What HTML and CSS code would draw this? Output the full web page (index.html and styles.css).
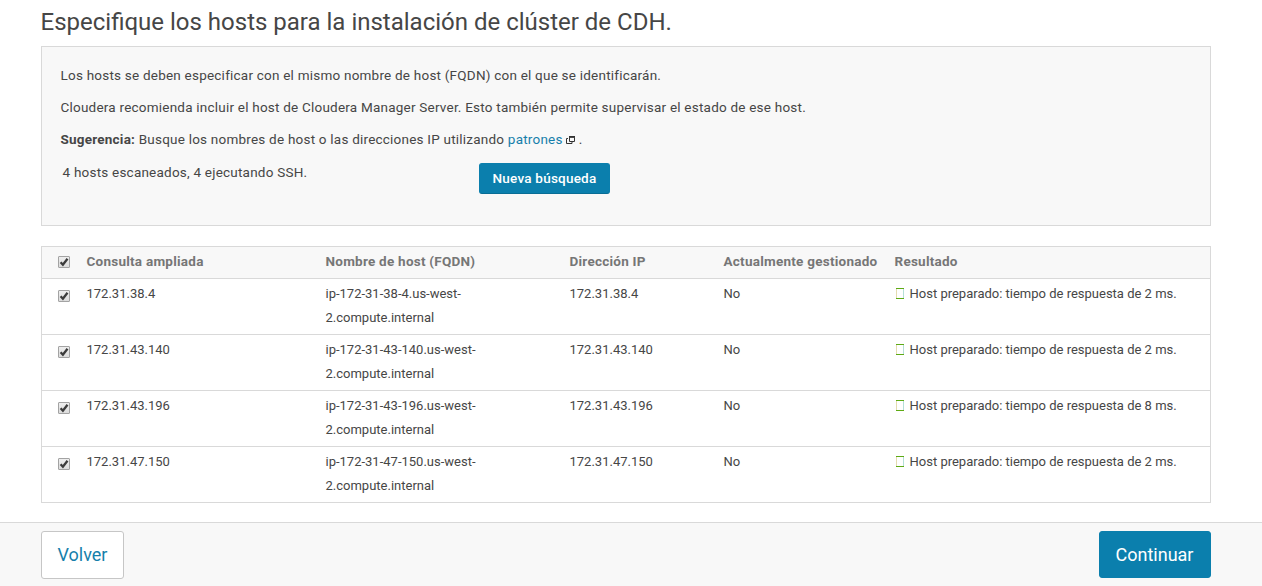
FILE: index.html
```html
<!DOCTYPE html>
<html lang="es">
<head>
<meta charset="utf-8">
<title>Instalación de clúster</title>
<link rel="stylesheet" href="styles.css">
</head>
<body>
<svg class="defs" width="0" height="0">
  <defs>
    <linearGradient id="box" x1="0" y1="0" x2="0" y2="1"><stop offset="0" stop-color="#efefef"/><stop offset="1" stop-color="#dcdcdc"/></linearGradient>
    <symbol id="check" viewBox="0 0 13 13">
      <rect x=".5" y=".5" width="11" height="11" rx=".5" fill="url(#box)" stroke="#a3a3a3"/>
      <path d="M2.6 6.2 4.9 8.7 9.5 2.8" fill="none" stroke="#3c3c3c" stroke-width="2.3"/>
    </symbol>
    <symbol id="glyph" viewBox="0 0 10 12">
      <path d="M1 .5H9M1 10.5H9" stroke="#5eaa14"/>
      <path d="M1.5 1V10" stroke="#e4dcb0"/>
      <path d="M8.5 1V10" stroke="#b5dfd8"/>
    </symbol>
  </defs>
</svg>
<main class="content">
  <h1 class="title">Especifique los hosts para la instalación de clúster de CDH.</h1>
  <section class="panel">
    <p class="l1">Los hosts se deben especificar con el mismo nombre de host (FQDN) con el que se identificarán.</p>
    <p class="l2">Cloudera recomienda incluir el host de Cloudera Manager Server. Esto también permite supervisar el estado de ese host.</p>
    <p class="l3"><b>Sugerencia:</b> Busque los nombres de host o las direcciones IP utilizando <a class="link">patrones</a> <svg class="ext" viewBox="0 0 9 8"><path d="M2 2.5H.5V7.5H6V6" fill="none" stroke="#333"/><path d="M3.5 1.2H8.5V5.5H3.5Z" fill="none" stroke="#333"/><path d="M3 .8H9" stroke="#333" stroke-width="1.6"/></svg> .</p>
    <div class="scan"><span class="status">4 hosts escaneados, 4 ejecutando SSH.</span><button class="btn search">Nueva búsqueda</button></div>
  </section>
  <table class="hosts">
    <colgroup><col class="c0"><col class="c1"><col class="c2"><col class="c3"><col class="c4"><col></colgroup>
    <thead><tr><th><svg class="cb"><use href="#check"/></svg></th><th>Consulta ampliada</th><th>Nombre de host (FQDN)</th><th>Dirección IP</th><th>Actualmente gestionado</th><th>Resultado</th></tr></thead>
    <tbody>
      <tr><td><svg class="cb"><use href="#check"/></svg></td><td>172.31.38.4</td><td>ip-172-31-38-4.us-west-<br>2.compute.internal</td><td>172.31.38.4</td><td>No</td><td><svg class="gl"><use href="#glyph"/></svg>Host preparado: tiempo de respuesta de 2 ms.</td></tr>
      <tr><td><svg class="cb"><use href="#check"/></svg></td><td>172.31.43.140</td><td>ip-172-31-43-140.us-west-<br>2.compute.internal</td><td>172.31.43.140</td><td>No</td><td><svg class="gl"><use href="#glyph"/></svg>Host preparado: tiempo de respuesta de 2 ms.</td></tr>
      <tr><td><svg class="cb"><use href="#check"/></svg></td><td>172.31.43.196</td><td>ip-172-31-43-196.us-west-<br>2.compute.internal</td><td>172.31.43.196</td><td>No</td><td><svg class="gl"><use href="#glyph"/></svg>Host preparado: tiempo de respuesta de 8 ms.</td></tr>
      <tr><td><svg class="cb"><use href="#check"/></svg></td><td>172.31.47.150</td><td>ip-172-31-47-150.us-west-<br>2.compute.internal</td><td>172.31.47.150</td><td>No</td><td><svg class="gl"><use href="#glyph"/></svg>Host preparado: tiempo de respuesta de 2 ms.</td></tr>
    </tbody>
  </table>
</main>
<footer class="footer"><button class="btn back">Volver</button><button class="btn next">Continuar</button></footer>
</body>
</html>
```

FILE: styles.css
```css
* { box-sizing: border-box; }
body { margin: 0; height: 586px; overflow: hidden; display: flex; flex-direction: column; background: #fff; color: #464646; font-family: Roboto, "Liberation Sans", sans-serif; font-size: 13px; }
.defs { display: block; flex: none; height: 0; }
.content { height: 522px; flex: none; padding: 0 51px 0 41px; }
.title { margin: 0 0 0 -0.5px; height: 46px; line-height: 45px; font-size: 24px; font-weight: 400; white-space: nowrap; }
.panel { height: 180px; margin-bottom: 20px; padding: 16px 18.5px; background: #f8f8f8; border: 1px solid #d9d9d9; font-size: 13.5px; letter-spacing: .22px; }
.panel p { margin: 0 0 8px; line-height: 24px; white-space: nowrap; }
.link { color: #167fab; }
.ext { width: 9px; height: 8px; }
.scan { display: flex; align-items: flex-start; padding-left: 2px; line-height: 24px; }
.status { width: 416.5px; padding-top: 1px; }
.btn { font-family: inherit; border: 1px solid #0b7fad; border-radius: 3px; background: #0b7fad; color: #fff; padding: 0; }
.search { width: 131px; height: 31px; margin-top: 4px; padding-bottom: 1px; font-size: 13.5px; letter-spacing: .225px; font-weight: 500; border-bottom-color: #096d95; }
.hosts { width: 1170px; table-layout: fixed; border-collapse: separate; border-spacing: 0; border: 1px solid #d9d9d9; border-bottom: 0; line-height: 24px; }
.hosts th, .hosts td { padding: 3px 0 4px; text-align: left; vertical-align: top; border-bottom: 1px solid #d9d9d9; white-space: nowrap; }
.hosts th { padding: 2px 0 5px; background: #f8f8f8; color: #767676; font-weight: 700; font-size: 13.5px; letter-spacing: .245px; }
.hosts th:first-child, .hosts td:first-child { padding-left: 16px; }
.c0 { width: 44.5px; } .c1 { width: 239px; } .c2 { width: 244px; } .c3 { width: 154px; } .c4 { width: 171px; }
.cb { display: block; width: 13px; height: 13px; margin-top: 8px; }
th .cb { margin-top: 7px; }
.gl { display: inline-block; width: 10px; height: 12px; margin: 0 4.5px 0 .5px; vertical-align: -2px; }
.footer { flex: 1; display: flex; justify-content: space-between; align-items: flex-start; padding: 8px 51px 0 41px; background: #f8f8f8; border-top: 1px solid #d9d9d9; }
.back, .next { height: 48px; font-size: 18px; }
.back { width: 83px; padding-bottom: 2px; background: #fff; border-color: #c6c6c6; color: #167fab; }
.next { width: 112px; height: 47px; padding-right: 1px; }
```
